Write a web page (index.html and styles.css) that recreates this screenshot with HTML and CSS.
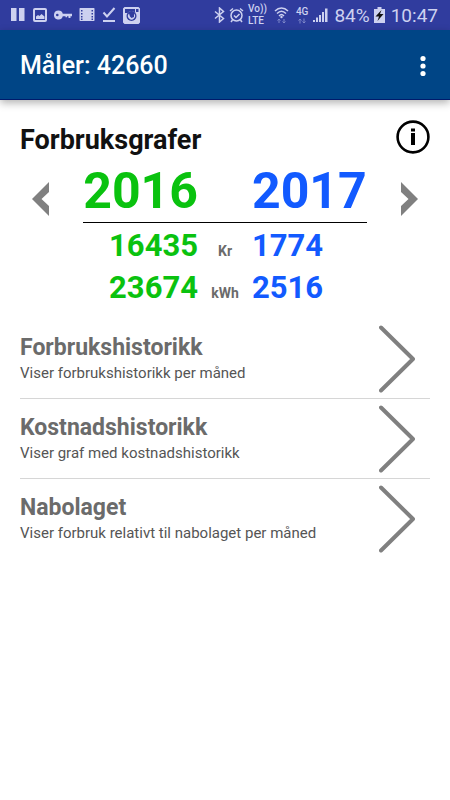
FILE: index.html
```html
<!DOCTYPE html>
<html lang="no">
<head>
    <meta charset="UTF-8">
    <meta name="viewport" content="width=device-width, initial-scale=1.0">
    <title>Måler: 42660</title>
    <link rel="stylesheet" href="styles.css">
</head>
<body>
    <div class="status-bar">
        <div class="status-group status-left">
            <svg width="14" height="16" viewBox="0 0 14 16"><path d="M0 1h5.500v13H0zM8 1h5.500v13H8z"/></svg>
            <svg width="15" height="16" viewBox="0 0 15 16"><rect class="line" x="2" y="2" width="12" height="12" rx="1"/><path d="M4 12V9.500L6 8l1.500 1L9.500 7l3 2.500V12z"/></svg>
            <svg width="18" height="16" viewBox="0 0 18 16"><path fill-rule="evenodd" d="M4.500 3.500a4.500 4.500 0 0 1 4.300 3.200H18v2.600h-1.500V11h-2V9.300H13v1h-1.500v-1H8.800A4.500 4.500 0 1 1 4.500 3.500zM3.300 6.700a1.300 1.300 0 1 0 0 2.600 1.300 1.300 0 0 0 0-2.600z"/></svg>
            <svg width="16" height="16" viewBox="0 0 16 16"><path fill-rule="evenodd" d="M1 1h14l.5.5v12l-.5.5H1l-.5-.5v-12zM2 3v1.500h1.500V3zM2 6v1.500h1.500V6zM2 9v1.500h1.500V9zM2 11.500V13h1.500v-1.500zM12.500 3v1.500H14V3zM12.500 6v1.500H14V6zM12.500 9v1.500H14V9zM12.500 11.500V13H14v-1.500z"/></svg>
            <svg width="14" height="16" viewBox="0 0 14 16"><path class="line" d="M1.500 5.500l3.500 4 7.500-8.500"/><path d="M1 13h12v2H1z"/></svg>
            <svg width="17" height="17" viewBox="0 0 17 17"><path fill-rule="evenodd" d="M1.500 0h14L17 1.500v14L15.500 17h-14L0 15.500v-14zM2 2v4h2.500a5 5 0 0 1 8 0H12V2zM13 2v3h2.500V2z"/><circle class="hole" cx="8.500" cy="9" r="5"/><path d="M6 6.500a3.500 3.500 0 1 0 5 0v3.500l-2.500 1L7 9.500z"/></svg>
        </div>
        <div class="status-group status-right">
            <svg width="11" height="16" viewBox="0 0 11 16"><path class="thin" d="M1 4.500l8.500 7L5.500 15V1l4 3.500-8.500 7"/></svg>
            <svg width="15" height="16" viewBox="0 0 15 16"><circle class="thin" cx="7.500" cy="8.500" r="5.500"/><path class="thin" d="M5 8.500l2 2 3.500-3.500M1 4l3-2.500M14 4l-3-2.500M3.500 13L2 15M11.500 13l1.500 2"/></svg>
            <div class="volte">
                <div>Vo))</div>
                <div>LTE</div>
            </div>
            <svg class="wifi" width="15" height="18" viewBox="0 0 15 18"><path class="thin" d="M1 5c4-4 9-4 13 0M3 7.500c3-3 6-3 9 0M5 10c2-2 3-2 5 0"/><circle cx="7.500" cy="11" r="1.200"/><path class="dim" d="M5 17v-4l-1.500 1.500M5 13l1.500 1.500M10 13v4l1.500-1.500M10 17l-1.500-1.500"/></svg>
            <span class="network">4G<svg width="10" height="6" viewBox="0 0 10 6"><path class="dim" d="M3 5.500V1L1.500 2.500M3 1l1.500 1.500M7 .5V5l1.500-1.500M7 5L5.500 3.500"/></svg></span>
            <svg class="signal" width="15" height="16" viewBox="0 0 15 16"><path d="M0 13h2v2H0zM3 10.500h2V15H3zM6 8h2v7H6zM9 5h2v10H9zM12 1.500h2.500V15H12z"/></svg>
            <span>84%</span>
            <svg class="battery" width="11" height="16" viewBox="0 0 11 16"><path d="M3.500 0h4v2H11v14H0V2h3.500z"/><path class="bolt" d="M7.500 3L1.500 9.500H5L3.500 14 9.500 7H6z"/></svg>
            <time>10:47</time>
        </div>
    </div>

    <header>
        <h1>Måler: 42660</h1>
        <button class="icon-button" type="button" aria-label="Meny">
            <svg width="6" height="22" viewBox="0 0 6 22"><circle cx="3" cy="3.500" r="2.600" fill="#fff"/><circle cx="3" cy="11" r="2.600" fill="#fff"/><circle cx="3" cy="18.500" r="2.600" fill="#fff"/></svg>
        </button>
    </header>

    <main>
        <div class="section-title">
            <h2>Forbruksgrafer</h2>
            <button class="icon-button" type="button" aria-label="Informasjon">
                <svg width="34" height="34" viewBox="0 0 34 34"><circle cx="17" cy="17" r="15.400" fill="none" stroke="#000" stroke-width="2.600"/><path d="M15 13h4v12h-4zM15 8.500h4v3h-4z"/></svg>
            </button>
        </div>

        <div class="comparison">
            <button class="icon-button" type="button" aria-label="Forrige år">
                <svg width="17" height="34" viewBox="0 0 17 34"><path d="M17 0v10l-7.500 7 7.500 7v10L0 17z" fill="#808080"/></svg>
            </button>
            <table>
                <thead>
                    <tr>
                        <th class="previous" scope="col">2016</th>
                        <td></td>
                        <th class="current" scope="col">2017</th>
                    </tr>
                </thead>
                <tbody>
                    <tr>
                        <td class="previous">16435</td>
                        <th class="unit" scope="row">Kr</th>
                        <td class="current">1774</td>
                    </tr>
                    <tr>
                        <td class="previous">23674</td>
                        <th class="unit" scope="row">kWh</th>
                        <td class="current">2516</td>
                    </tr>
                </tbody>
            </table>
            <button class="icon-button" type="button" aria-label="Neste år">
                <svg width="17" height="34" viewBox="0 0 17 34"><path d="M0 0v10l7.500 7L0 24v10l17-17z" fill="#808080"/></svg>
            </button>
        </div>

        <nav>
            <a href="#forbruk">
                <span class="link-text">
                    <strong>Forbrukshistorikk</strong>
                    <span>Viser forbrukshistorikk per måned</span>
                </span>
                <svg class="chevron" width="36" height="68" viewBox="0 0 36 68"><path d="M2 2.500L34 34 2 65.500"/></svg>
            </a>
            <a href="#kostnad">
                <span class="link-text">
                    <strong>Kostnadshistorikk</strong>
                    <span>Viser graf med kostnadshistorikk</span>
                </span>
                <svg class="chevron" width="36" height="68" viewBox="0 0 36 68"><path d="M2 2.500L34 34 2 65.500"/></svg>
            </a>
            <a href="#nabolaget">
                <span class="link-text">
                    <strong>Nabolaget</strong>
                    <span>Viser forbruk relativt til nabolaget per måned</span>
                </span>
                <svg class="chevron" width="36" height="68" viewBox="0 0 36 68"><path d="M2 2.500L34 34 2 65.500"/></svg>
            </a>
        </nav>
    </main>
</body>
</html>
```

FILE: styles.css
```css
/* Global Styles */
* {
    box-sizing: border-box;
}

body {
    font-family: Roboto, sans-serif;
    color: #111;
    background-color: #fff;
    margin: 0;
}

svg {
    display: block;
    flex-shrink: 0;
}

.icon-button {
    display: block;
    padding: 0;
    background: none;
    border: none;
    cursor: pointer;
}

/* Status bar */
.status-bar {
    display: flex;
    justify-content: space-between;
    height: 30px;
    padding: 0 12px 0 11px;
    background-color: #303c9e;
    color: #cdd1f0;
    font-size: 19px;
}

.status-group {
    display: flex;
    align-items: center;
}

.status-left {
    gap: 7px;
}

.status-right {
    gap: 4px;
}

.status-bar svg {
    fill: #cdd1f0;
}

.status-bar .line {
    fill: none;
    stroke: #cdd1f0;
    stroke-width: 2;
}

.status-bar .thin {
    fill: none;
    stroke: #cdd1f0;
    stroke-width: 1.5;
}

.status-bar .dim {
    fill: none;
    stroke: #7d86c8;
    stroke-width: 1;
}

.status-bar .hole {
    fill: #303c9e;
}

.status-bar .bolt {
    fill: #111;
}

.volte {
    font-size: 10px;
    font-weight: 500;
    line-height: 12px;
}

.wifi {
    margin: 0 3px;
}

.network {
    display: flex;
    flex-direction: column;
    align-items: center;
    gap: 1px;
    font-size: 10px;
    font-weight: 500;
    line-height: 10px;
}

.signal {
    margin: 0 2px 0 1px;
}

.battery {
    margin-right: 2px;
}

/* App bar */
header {
    display: flex;
    align-items: center;
    justify-content: space-between;
    height: 70px;
    padding: 2px 24px 0 20px;
    background-color: #004586;
    border-bottom: 1px solid #001a6b;
    box-shadow: 0 3px 8px rgba(0,0,0,0.3);
}

header h1 {
    margin: 0;
    color: #fff;
    font-size: 25px;
    font-weight: 500;
}

main {
    padding: 20px 20px 0;
}

.section-title {
    display: flex;
    align-items: flex-start;
    justify-content: space-between;
    height: 41px;
}

.section-title h2 {
    margin: 0;
    font-size: 27px;
    line-height: 40px;
}

/* Year comparison */
.comparison {
    display: flex;
    align-items: flex-start;
    justify-content: space-between;
    padding: 0 12px;
}

.comparison .icon-button {
    margin-top: 21px;
}

table {
    border-collapse: collapse;
}

th, td {
    padding: 0;
    font-size: 31px;
    font-weight: bold;
}

thead th {
    font-size: 50px;
    line-height: 61px;
}

thead tr {
    border-bottom: 1px solid #000;
}

tbody td {
    padding-top: 4px;
    line-height: 38px;
}

.previous {
    color: #0ac20f;
    text-align: right;
}

.current {
    color: #125aff;
    text-align: left;
}

th.unit {
    width: 54px;
    padding-top: 14px;
    color: #6b6b6b;
    font-size: 14px;
    line-height: 28px;
}

/* Links */
nav {
    margin-top: 12px;
}

nav a {
    display: flex;
    align-items: center;
    justify-content: space-between;
    height: 80px;
    padding-right: 15px;
    border-bottom: 1px solid #d6d6d6;
    color: #555;
    font-size: 15px;
    text-decoration: none;
}

nav a:last-child {
    border-bottom: none;
}

.link-text {
    display: flex;
    flex-direction: column;
    line-height: 22px;
}

.link-text strong {
    color: #6b6b6b;
    font-size: 23px;
    line-height: 28px;
}

.chevron {
    fill: none;
    stroke: #808080;
    stroke-width: 4;
    stroke-linecap: round;
    stroke-linejoin: round;
}
```
